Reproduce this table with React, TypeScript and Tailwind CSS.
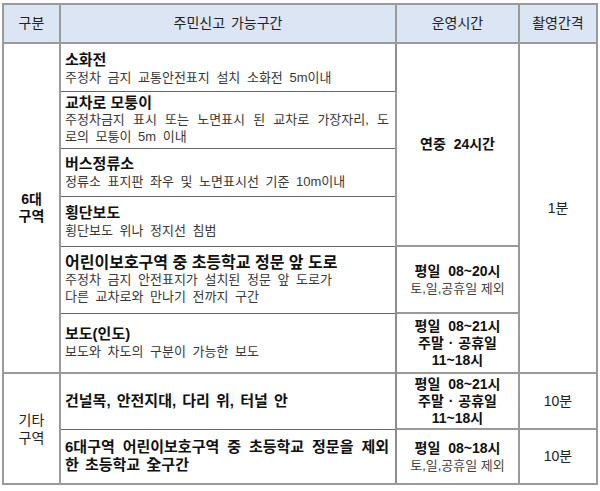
const font = { fontFamily: '"Liberation Sans", "Noto Sans CJK KR", sans-serif' };

const Title = ({ children }: { children: React.ReactNode }) => (
  <div className="text-[15px] font-bold leading-[18px] text-[#111]">{children}</div>
);

const Desc = ({ children, justify }: { children: React.ReactNode; justify?: boolean }) => (
  <div
    className={
      "text-[13px] leading-[17px] text-[#383838] [word-spacing:3px]" +
      (justify ? " text-justify [text-align-last:justify]" : "")
    }
  >
    {children}
  </div>
);

const Zone = ({ children }: { children: React.ReactNode }) => (
  <td className="border-x-2 border-x-[#8c8c8c] border-y border-y-[#666] pl-[4px] pr-[6px] align-middle">
    {children}
  </td>
);

const Bold = ({ children }: { children: React.ReactNode }) => (
  <div className="text-[14px] font-bold leading-[17px] text-[#111] [word-spacing:4px]">{children}</div>
);

const Weekend = () => (
  <div className="text-[14px] font-bold leading-[17px] text-[#111] [word-spacing:1px]">주말 · 공휴일</div>
);

const Small = ({ children }: { children: React.ReactNode }) => (
  <div className="text-[13px] leading-[17px] text-[#444]">{children}</div>
);

const timeCell = "border-2 border-[#9a9a9a] text-center align-middle";
const headCell = "border-2 border-[#9a9a9a] font-normal";

export default function App() {
  return (
    <div className="w-[600px] h-[491px] bg-white pt-[3px] pl-[2px]" style={font}>
      <table className="table-fixed border-collapse w-[594px] border-2 border-[#9a9a9a]">
        <colgroup>
          <col className="w-[57px]" />
          <col className="w-[336px]" />
          <col className="w-[123px]" />
          <col className="w-[78px]" />
        </colgroup>
        <thead>
          <tr className="h-[39px] bg-[#dbe5f4] text-[14px] text-[#222] [word-spacing:2px]">
            <th className={headCell}>구분</th>
            <th className={headCell}>주민신고 가능구간</th>
            <th className={headCell}>운영시간</th>
            <th className={headCell}>촬영간격</th>
          </tr>
        </thead>
        <tbody>
          <tr className="h-[48px]">
            <td rowSpan={6} className="border-2 border-[#9a9a9a] text-center align-middle text-[14px] font-bold leading-[17px] text-[#111]">
              6대
              <br />
              구역
            </td>
            <Zone>
              <div className="pt-[2px]">
                <Title>소화전</Title>
                <Desc>주정차 금지 교통안전표지 설치 소화전 5m이내</Desc>
              </div>
            </Zone>
            <td rowSpan={4} className={timeCell}>
              <Bold>연중 24시간</Bold>
            </td>
            <td rowSpan={6} className="border-2 border-[#9a9a9a] text-center align-middle text-[14px] text-[#222]">
              1분
            </td>
          </tr>
          <tr className="h-[57px]">
            <Zone>
              <div className="text-[15px] font-bold leading-[17px] text-[#111]">교차로 모퉁이</div>
              <Desc justify>주정차금지 표시 또는 노면표시 된 교차로 가장자리, 도</Desc>
              <Desc>로의 모퉁이 5m 이내</Desc>
            </Zone>
          </tr>
          <tr className="h-[48px]">
            <Zone>
              <Title>버스정류소</Title>
              <Desc>정류소 표지판 좌우 및 노면표시선 기준 10m이내</Desc>
            </Zone>
          </tr>
          <tr className="h-[50px]">
            <Zone>
              <Title>횡단보도</Title>
              <Desc>횡단보도 위나 정지선 침범</Desc>
            </Zone>
          </tr>
          <tr className="h-[67px]">
            <Zone>
              <div className="text-[16px] font-bold leading-[17px] text-[#111]">
                어린이보호구역 중 초등학교 정문 앞 도로
              </div>
              <Desc>
                주정차 금지 안전표지가 설치된 정문 앞 도로가
                <br />
                다른 교차로와 만나기 전까지 구간
              </Desc>
            </Zone>
            <td className={timeCell}>
              <Bold>평일 08~20시</Bold>
              <Small>토,일,공휴일 제외</Small>
            </td>
          </tr>
          <tr className="h-[60px]">
            <Zone>
              <Title>보도(인도)</Title>
              <Desc>보도와 차도의 구분이 가능한 보도</Desc>
            </Zone>
            <td className={timeCell}>
              <Bold>평일 08~21시</Bold>
              <Weekend />
              <Bold>11~18시</Bold>
            </td>
          </tr>
          <tr className="h-[56px]">
            <td rowSpan={2} className="border-2 border-[#9a9a9a] text-center align-middle text-[14px] leading-[18px] text-[#222]">
              기타
              <br />
              구역
            </td>
            <td className="border-x-2 border-x-[#8c8c8c] border-t-2 border-t-[#9a9a9a] border-b border-b-[#666] pl-[4px] pr-[6px] align-middle">
              <div className="text-[15px] font-bold leading-[18px] text-[#111] [word-spacing:2px]">
                건널목, 안전지대, 다리 위, 터널 안
              </div>
            </td>
            <td className={timeCell}>
              <Bold>평일 08~21시</Bold>
              <Weekend />
              <Bold>11~18시</Bold>
            </td>
            <td className="border-2 border-[#9a9a9a] text-center align-middle text-[14px] text-[#222]">
              10분
            </td>
          </tr>
          <tr className="h-[55px]">
            <td className="border-x-2 border-x-[#8c8c8c] border-b-2 border-b-[#9a9a9a] pl-[4px] pr-[6px] align-middle">
              <div className="text-[15px] font-bold leading-[18px] text-[#111] text-justify [text-align-last:justify]">
                6대구역 어린이보호구역 중 초등학교 정문을 제외
              </div>
              <div className="text-[15px] font-bold leading-[18px] text-[#111] [word-spacing:2px]">
                한 초등학교 全구간
              </div>
            </td>
            <td className={timeCell}>
              <Bold>평일 08~18시</Bold>
              <Small>토,일,공휴일 제외</Small>
            </td>
            <td className="border-2 border-[#9a9a9a] text-center align-middle text-[14px] text-[#222]">
              10분
            </td>
          </tr>
        </tbody>
      </table>
    </div>
  );
}
